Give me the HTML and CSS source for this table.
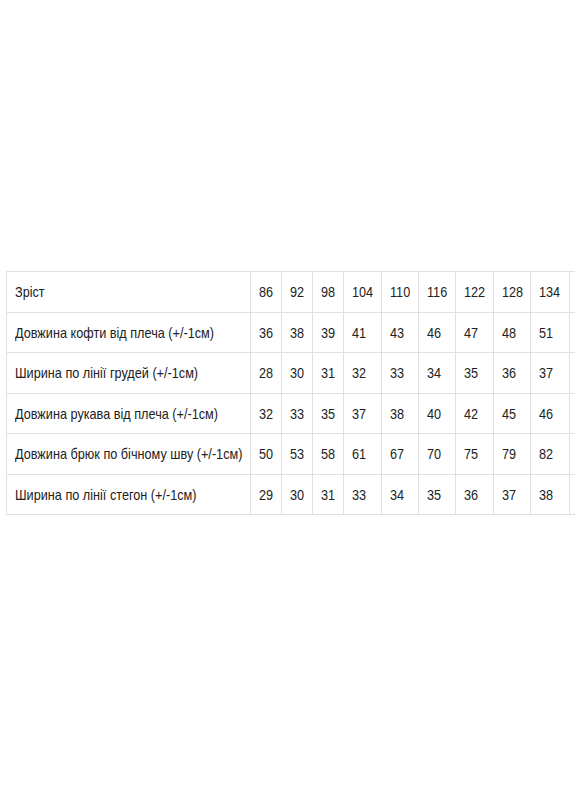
FILE: index.html
```html
<!DOCTYPE html>
<html lang="uk">
<head>
<meta charset="utf-8">
<title>Розмірна сітка</title>
<link rel="stylesheet" href="styles.css">
</head>
<body>
<div class="page">
<table class="sizes">
<colgroup>
<col class="c-label">
<col class="c-s"><col class="c-s"><col class="c-s">
<col class="c-m"><col class="c-m2"><col class="c-m2"><col class="c-m"><col class="c-m2"><col class="c-l"><col class="c-x">
</colgroup>
<tbody>
<tr><td><span class="t">Зріст</span></td><td><span class="t">86</span></td><td><span class="t">92</span></td><td><span class="t">98</span></td><td><span class="t">104</span></td><td><span class="t">110</span></td><td><span class="t">116</span></td><td><span class="t">122</span></td><td><span class="t">128</span></td><td><span class="t">134</span></td><td></td></tr>
<tr><td><span class="t">Довжина кофти від плеча (+/-1см)</span></td><td><span class="t">36</span></td><td><span class="t">38</span></td><td><span class="t">39</span></td><td><span class="t">41</span></td><td><span class="t">43</span></td><td><span class="t">46</span></td><td><span class="t">47</span></td><td><span class="t">48</span></td><td><span class="t">51</span></td><td></td></tr>
<tr><td><span class="t">Ширина по лінії грудей (+/-1см)</span></td><td><span class="t">28</span></td><td><span class="t">30</span></td><td><span class="t">31</span></td><td><span class="t">32</span></td><td><span class="t">33</span></td><td><span class="t">34</span></td><td><span class="t">35</span></td><td><span class="t">36</span></td><td><span class="t">37</span></td><td></td></tr>
<tr><td><span class="t">Довжина рукава від плеча (+/-1см)</span></td><td><span class="t">32</span></td><td><span class="t">33</span></td><td><span class="t">35</span></td><td><span class="t">37</span></td><td><span class="t">38</span></td><td><span class="t">40</span></td><td><span class="t">42</span></td><td><span class="t">45</span></td><td><span class="t">46</span></td><td></td></tr>
<tr><td><span class="t">Довжина брюк по бічному шву (+/-1см)</span></td><td><span class="t">50</span></td><td><span class="t">53</span></td><td><span class="t">58</span></td><td><span class="t">61</span></td><td><span class="t">67</span></td><td><span class="t">70</span></td><td><span class="t">75</span></td><td><span class="t">79</span></td><td><span class="t">82</span></td><td></td></tr>
<tr><td><span class="t">Ширина по лінії стегон (+/-1см)</span></td><td><span class="t">29</span></td><td><span class="t">30</span></td><td><span class="t">31</span></td><td><span class="t">33</span></td><td><span class="t">34</span></td><td><span class="t">35</span></td><td><span class="t">36</span></td><td><span class="t">37</span></td><td><span class="t">38</span></td><td></td></tr>
</tbody>
</table>
</div>
</body>
</html>
```
FILE: styles.css
```css
html, body {
  margin: 0;
  padding: 0;
  background: #fff;
  overflow: hidden;
}
.page {
  width: 575px;
  height: 800px;
  overflow: hidden;
  padding: 271px 0 0 6px;
  box-sizing: border-box;
}
.sizes {
  border-collapse: collapse;
  table-layout: fixed;
  width: 597px;
  font-family: "Liberation Sans", Arial, sans-serif;
  font-size: 15px;
  color: #222;
}
.sizes td {
  border: 1px solid #e0e0e0;
  padding: 0 8px;
  height: 40.5px;
  box-sizing: border-box;
  vertical-align: middle;
  white-space: nowrap;
  overflow: hidden;
}
.t {
  display: inline-block;
  transform: scaleX(0.845);
  transform-origin: 0 50%;
}
.c-label { width: 244px; }
.c-s { width: 31px; }
.c-m { width: 38px; }
.c-m2 { width: 37px; }
.c-l { width: 39px; }
.c-x { width: 34px; }
```
